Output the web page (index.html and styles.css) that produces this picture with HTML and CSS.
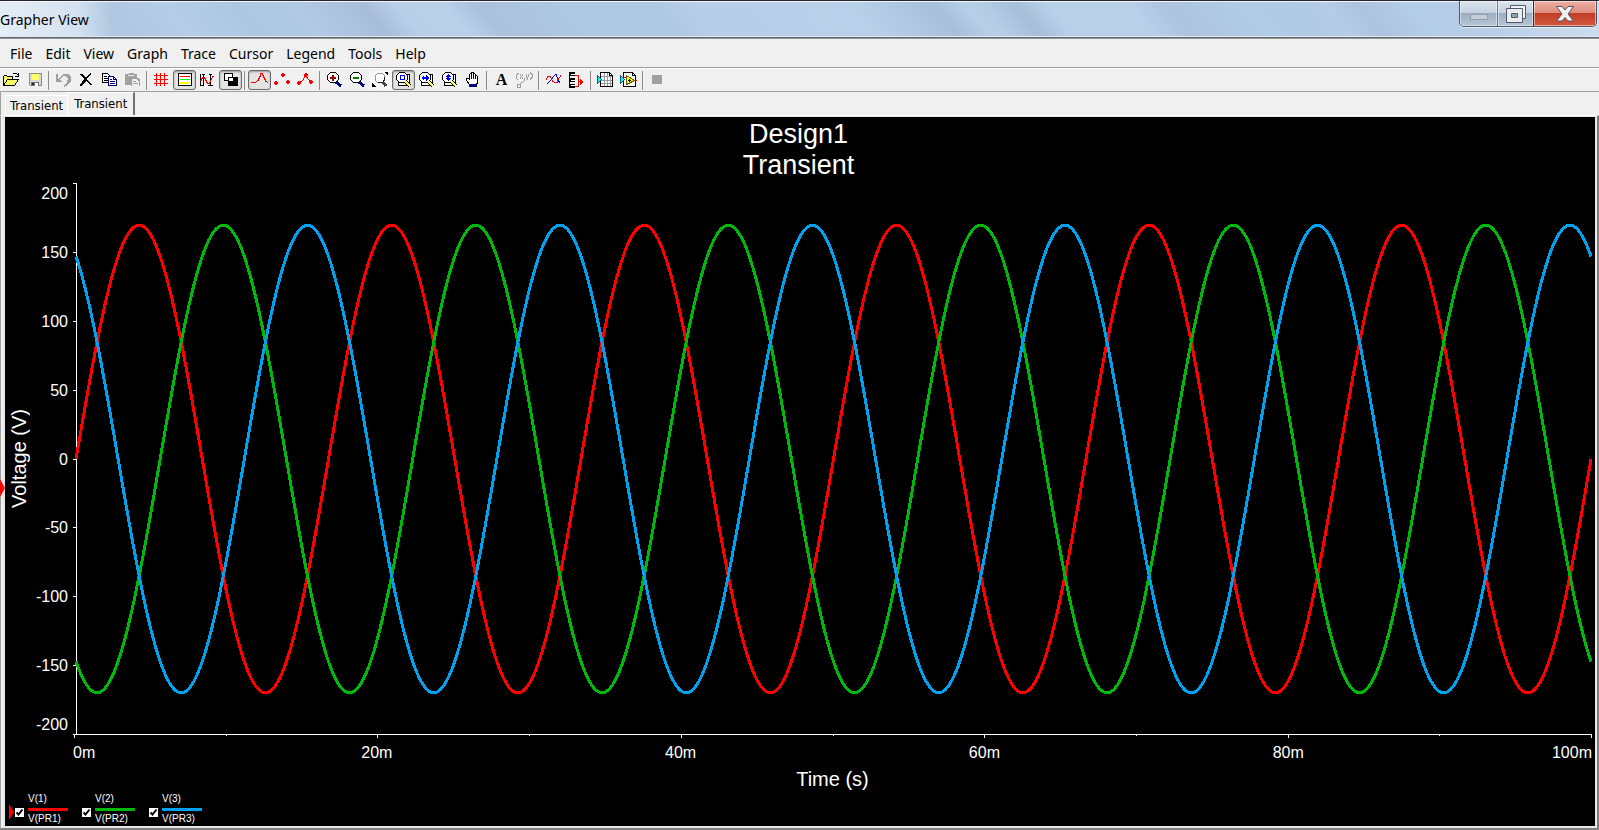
FILE: index.html
```
<!DOCTYPE html>
<html lang="en">
<head>
    <meta charset="UTF-8">
    <meta name="viewport" content="width=device-width, initial-scale=1.0">
    <link rel="stylesheet" href="styles.css">
    <title>Grapher View</title>
</head>
<body>
    <header class="title-bar">
        <h1 class="window-title">Grapher View</h1>
        <div class="window-buttons">
            <button class="win-btn" aria-label="Minimize" disabled>
                <svg width="20" height="16" viewBox="0 0 20 16"><rect x="1.500" y="8.500" width="17" height="5" fill="#c3cfd8" stroke="#929da9"/></svg>
            </button>
            <button class="win-btn restore" aria-label="Restore">
                <svg width="20" height="20" viewBox="0 0 20 20">
                    <path d="M4.500 1.500h15v13h-15z" fill="#f4f4f4" stroke="#535a6b"/>
                    <path d="M.5 4.500h16v14H.5z" fill="#ececec" stroke="#535a6b"/>
                    <path d="M5.500 9.500h6v4h-6z" fill="#8fa3b8" stroke="#535a6b"/>
                </svg>
            </button>
            <button class="win-btn close" aria-label="Close">
                <svg width="20" height="18" viewBox="0 0 20 18"><path d="M1.500 1.500h5.500l3 3.500 3-3.500h5.500l-5.500 7.500 5.500 7h-5.500l-3-3.500-3 3.500H1.500l5.500-7z" fill="#f3f3f3" stroke="#5a5260" stroke-linejoin="round"/></svg>
            </button>
        </div>
    </header>

    <nav class="menu-bar">
        <button class="menu">File</button>
        <button class="menu">Edit</button>
        <button class="menu">View</button>
        <button class="menu">Graph</button>
        <button class="menu">Trace</button>
        <button class="menu">Cursor</button>
        <button class="menu">Legend</button>
        <button class="menu">Tools</button>
        <button class="menu">Help</button>
    </nav>

    <div class="toolbar" role="toolbar">
        <button class="tool" aria-label="Open">
            <svg viewBox="0 0 17 16"><path d="M0 4h4v1h5v3h5L10 14H0z" fill="#ffff66"/><path d="M.5 13.500v-9l1-1h2l1 1h5v3M.5 13.500l4-6h11l-4 6zM9.500 2.500l1-1h3l2 2M15.500.5v4h-4" fill="none" stroke="#000"/></svg>
        </button>
        <button class="tool" aria-label="Save">
            <svg viewBox="0 0 17 16"><path d="M3 1h12v13H4l-1-1z" fill="#d8d8d8"/><path d="M3.500 12.500V1.500h12v12h-11z" fill="none" stroke="#8a8a8a"/><path d="M6 2h7v6H6z" fill="#ffff66"/><path d="M5 10h8v4H5z" fill="#777"/><path d="M9 11h3v3H9z" fill="#fff"/><path d="M6 11h2v2H6z" fill="#222"/></svg>
        </button>
        <span class="sep"></span>
        <button class="tool" aria-label="Undo">
            <svg viewBox="0 0 17 16"><path d="M1 2h2v5l2-2 3-3h5l3 3v4l-3 4-4 2v-2l3-3 1-3-2-3H8L5 8l2 1v1H1z" fill="#a0a0a0"/></svg>
        </button>
        <button class="tool" aria-label="Delete">
            <svg viewBox="0 0 17 16"><path d="M2 2h2l4 4 4-5h1v1L9 7l5 6h-2L8 9l-4 5H2v-1l4-6z" fill="#000"/></svg>
        </button>
        <button class="tool" aria-label="Copy">
            <svg viewBox="0 0 17 16"><path d="M1.500 1.500h5l3 3v6h-8z" fill="#fff" stroke="#000"/><path d="M3 4.500h3M3 6.500h5M3 8.500h5" stroke="#000"/><path d="M7.500 4.500h5l3 3v6h-8z" fill="#fff" stroke="#000080"/><path d="M12.500 4.500v3h3M9 7.500h2M9 9.500h5M9 11.500h5" fill="none" stroke="#000080"/></svg>
        </button>
        <button class="tool" aria-label="Paste">
            <svg viewBox="0 0 17 16"><path d="M1 2h3l1-1h4l1 1h3v4h2l1 2v6H7v-1H1z" fill="#a0a0a0"/><path d="M4 3.500h6M8.500 7.500h4l2 2v4h-6z" fill="#eee" stroke="#eee"/><path d="M9 9.500h3M9 11.500h5" stroke="#a0a0a0"/></svg>
        </button>
        <span class="sep"></span>
        <button class="tool" aria-label="Show grid">
            <svg viewBox="0 0 17 16"><path d="M3.500 1v13M7.500 1v13M11.500 1v13M1 3.500h14M1 7.500h14M1 11.500h14" stroke="#f00"/></svg>
        </button>
        <button class="tool" aria-label="Show legend" aria-pressed="true">
            <svg viewBox="0 0 17 16"><path d="M2.500 1.500h13v12h-13z" fill="#fff" stroke="#000"/><path d="M4 4.500h10" stroke="#f00"/><path d="M4 7.500h10" stroke="#0f0"/><path d="M4 10.500h10" stroke="#ff0" stroke-width="2"/></svg>
        </button>
        <button class="tool" aria-label="Show cursors">
            <svg viewBox="0 0 17 16"><path d="M1.500 2v12M4.500 2v12M11.500 2v12M1 13.500h4M9 13.500h5M3 2.500h3M10 2.500h3" stroke="#000"/><path d="M1.500 9.500l2-4h2l3 6h2l3-7h1" fill="none" stroke="#f00"/></svg>
        </button>
        <button class="tool" aria-label="Reverse colors" aria-pressed="true">
            <svg viewBox="0 0 17 16"><path d="M6 5h10v9H6z" fill="#000"/><path d="M2.500 1.500h8v7h-8z" fill="#fff" stroke="#000"/><path d="M6 5h4v3H6z" fill="#000"/><path d="M7 6h4v3H7z" fill="#fff"/></svg>
        </button>
        <span class="sep"></span>
        <button class="tool" aria-label="Lines" aria-pressed="true">
            <svg viewBox="0 0 17 16"><path d="M0 10.500h4l3-2 2-4 1-3h1l2 4 2 4 2 1" fill="none" stroke="#f00"/></svg>
        </button>
        <button class="tool" aria-label="Points">
            <svg viewBox="0 0 17 16"><path d="M1 9h2v1h1v2H3v1H1v-1H0v-2h1zM8 1h2v1h1v2h-1v1H8V4H7V2h1zM13 8h2v1h1v2h-1v1h-2v-1h-1V9h1z" fill="#f00"/></svg>
        </button>
        <button class="tool" aria-label="Lines and points">
            <svg viewBox="0 0 17 16"><path d="M1 9h2v1h1v2H3v1H1v-1H0v-2h1zM8 1h2v1h1v2h-1v1H8V4H7V2h1zM13 8h2v1h1v2h-1v1h-2v-1h-1V9h1z" fill="#f00"/><path d="M2.500 10.500l3-2 3-5 3 4 3 2" fill="none" stroke="#f00"/></svg>
        </button>
        <span class="sep"></span>
        <button class="tool" aria-label="Zoom in">
            <svg viewBox="0 0 17 16"><path d="M10 10l5 4" stroke="#000080" stroke-width="3"/><path d="M4.500.5h5l3 3v4l-3 3h-5l-3-3v-4z" fill="#fff" stroke="#000"/><path d="M7 3v6M4 6h6" stroke="#900" stroke-width="2"/></svg>
        </button>
        <button class="tool" aria-label="Zoom out">
            <svg viewBox="0 0 17 16"><path d="M10 10l5 4" stroke="#000080" stroke-width="3"/><path d="M4.500.5h5l3 3v4l-3 3h-5l-3-3v-4z" fill="#fff" stroke="#000"/><path d="M4 6h6" stroke="#008000" stroke-width="2"/></svg>
        </button>
        <button class="tool flat" aria-label="Zoom fit">
            <svg viewBox="0 0 17 16"><path d="M10 9l4 5" stroke="#444" stroke-width="3"/><path d="M5.500 1.500h5l2 2v4l-2 3h-5l-2-2v-5z" fill="#fff" stroke="#999"/><path d="M12.500 5v3l-2 2.500h-5" fill="none" stroke="#222"/><path d="M13 0h3v4zM0 11v4h4z" fill="#000"/></svg>
        </button>
        <button class="tool" aria-label="Zoom area" aria-pressed="true">
            <svg viewBox="0 0 17 16"><path d="M3.500 4.500v9h11v-11h-3" fill="#fff" stroke="#000"/><path d="M4.500.5h5l3 3v4l-3 3h-5l-3-3v-4z" fill="#fff" stroke="#000"/><path d="M5.500 3.500h4v4h-4z" fill="#fff" stroke="#00f"/><path d="M10 9l5 5" stroke="#000" stroke-width="4"/><path d="M10 9l5 5" stroke="#ff6" stroke-width="2"/></svg>
        </button>
        <button class="tool" aria-label="Zoom horizontal">
            <svg viewBox="0 0 17 16"><path d="M3.500 4.500v9h11v-11h-3" fill="#fff" stroke="#000"/><path d="M4.500.5h5l3 3v4l-3 3h-5l-3-3v-4z" fill="#fff" stroke="#000"/><path d="M3 6l3-3v2h2V3l3 3-3 3V7H6v2z" fill="#00f"/><path d="M10 9l5 5" stroke="#000" stroke-width="4"/><path d="M10 9l5 5" stroke="#ff6" stroke-width="2"/></svg>
        </button>
        <button class="tool" aria-label="Zoom vertical">
            <svg viewBox="0 0 17 16"><path d="M3.500 4.500v9h11v-11h-3" fill="#fff" stroke="#000"/><path d="M4.500.5h5l3 3v4l-3 3h-5l-3-3v-4z" fill="#fff" stroke="#000"/><path d="M7 2l3 3H8v1h2l-3 3-3-3h2V5H4z" fill="#00f"/><path d="M10 9l5 5" stroke="#000" stroke-width="4"/><path d="M10 9l5 5" stroke="#ff6" stroke-width="2"/></svg>
        </button>
        <button class="tool" aria-label="Pan">
            <svg viewBox="0 0 17 16"><path d="M5.500 12.500l-3-4v-2h2l1 1v-5l1-1 1 1v-2h2v2l1-1 1 1v2l1-1 1 1v5l-1 4z" fill="#fff" stroke="#000"/><path d="M7.500 2v5M9.500 2v5M11.500 3v4" stroke="#000"/><path d="M5 12h8v3H5z" fill="#000080"/></svg>
        </button>
        <span class="sep"></span>
        <button class="tool letter" aria-label="Add text">A</button>
        <button class="tool label" aria-label="Add data label">
            <svg viewBox="0 0 17 16"><path d="M2.500 1l-2 2v3l1 2M4 2.500l3 4M7 2.500l-3 4M8.500 6v2M10 2.500l1 3M13 2.500l-2 5M14 .5l2 2v3l-2 2M9 8.500l-6 4M1 12h3v3H1z" fill="none" stroke="#a0a0a0"/></svg>
        </button>
        <span class="sep"></span>
        <button class="tool" aria-label="Overlay traces">
            <svg viewBox="0 0 17 16"><path d="M1.500 12.500l4-4 3-4 2-2h1l1 5 3 4" fill="none" stroke="#00f"/><path d="M1 7.500l2-3h2l3 5 2 1h2l1-3 3-4" fill="none" stroke="#f00"/></svg>
        </button>
        <button class="tool" aria-label="Merge pages">
            <svg viewBox="0 0 17 16"><path d="M1 0h6v4H1zM1 6h6v4H1zM1 12h6v4H1zM1 0h1v16H1z" fill="#000"/><path d="M3 2.500h4M3 8.500h4M3 13.500h4" stroke="#fff"/><path d="M7 3.500h3.500v11H7" fill="none" stroke="#f00"/><path d="M10.500 9.500h3" stroke="#f00"/><path d="M12 7l4 3-4 3z" fill="#f00"/></svg>
        </button>
        <span class="sep"></span>
        <button class="tool" aria-label="Export to Excel">
            <svg viewBox="0 0 17 16"><path d="M3.500.5h9l3 3v11h-12z" fill="#fff" stroke="#000"/><path d="M7.500 1v13M10.500 1v13M13.500 4v10M4 4.500h11M4 8.500h11M4 11.500h11" stroke="#999"/><path d="M12.500.5v3h3" fill="none" stroke="#000"/><path d="M.5 3.500l4 4-4 4z" fill="#0ff" stroke="#006080"/></svg>
        </button>
        <button class="tool" aria-label="Export to measurement file">
            <svg viewBox="0 0 17 16"><path d="M3.500.5h9l3 3v11h-12z" fill="#fff" stroke="#000"/><path d="M12.500.5v3h3" fill="none" stroke="#000"/><path d="M.5 3.500l4 4-4 4z" fill="#0ff" stroke="#006080"/><path d="M3 5.500h4M14 8.500h3" stroke="#f00"/><path d="M6.500 3.500l8 5-8 4z" fill="#ff0" stroke="#660"/><path d="M8 8.500h3M9.500 7v3" stroke="#000"/></svg>
        </button>
        <span class="sep"></span>
        <button class="tool" aria-label="Stop" disabled>
            <svg viewBox="0 0 17 16"><path d="M3 3h10v9H3z" fill="#a0a0a0"/></svg>
        </button>
    </div>

    <div class="tabs" role="tablist">
        <button class="tab" role="tab" aria-selected="false">Transient</button>
        <button class="tab active" role="tab" aria-selected="true">Transient</button>
    </div>

    <main class="chart-frame">
        <span class="page-marker"></span>
        <div class="chart">
            <h2 class="chart-title">Design1<br>Transient</h2>
            <div class="y-title"><span>Voltage (V)</span></div>
            <div class="y-labels">
                <span>200</span><span>150</span><span>100</span><span>50</span><span>0</span><span>-50</span><span>-100</span><span>-150</span><span>-200</span>
            </div>
            <div class="plot"><svg id="plot"></svg></div>
            <div class="x-labels">
                <span>0m</span><span>20m</span><span>40m</span><span>60m</span><span>80m</span><span>100m</span>
            </div>
            <div class="x-title">Time (s)</div>
            <div class="legend">
                <span class="trace-marker"></span>
                <label class="legend-item"><input type="checkbox" checked><span class="trace red"><span>V(1)</span><span>V(PR1)</span></span></label>
                <label class="legend-item"><input type="checkbox" checked><span class="trace green"><span>V(2)</span><span>V(PR2)</span></span></label>
                <label class="legend-item"><input type="checkbox" checked><span class="trace blue"><span>V(3)</span><span>V(PR3)</span></span></label>
            </div>
        </div>
    </main>

    <script>
        document.addEventListener("DOMContentLoaded", function () {
            const svg = document.getElementById("plot");
            const checks = document.querySelectorAll(".legend-item input");
            const tick = 3;
            const amplitude = 169.7;
            const frequency = 60;
            const traces = [
                { color: "#ff0000", phase: 0 },
                { color: "#00b80c", phase: -120 },
                { color: "#00a2f0", phase: 120 }
            ];

            const addPath = (d, color, width) => {
                const path = document.createElementNS("http://www.w3.org/2000/svg", "path");
                path.setAttribute("d", d);
                path.setAttribute("fill", "none");
                path.setAttribute("stroke", color);
                path.setAttribute("stroke-width", width);
                svg.appendChild(path);
            };

            const draw = () => {
                const box = svg.getBoundingClientRect();
                const width = Math.round(box.width) - tick - 1;
                const height = Math.round(box.height) - tick - 1;
                svg.innerHTML = "";

                // axes with their ticks
                let axes = `M${tick + 0.5} 0V${height + 0.5}M1 ${height + 0.5}H${tick + width + 1}`;
                for (let i = 0; i <= 8; i++) {
                    const y = Math.round(height * i / 8) + 0.5;
                    axes += `M0 ${y}H${tick}`;
                }
                for (let i = 0; i <= 10; i++) {
                    const x = 1 + Math.round((width + 2) * i / 10) + 0.5;
                    axes += `M${x} ${height}v${i % 2 ? 2 : 4}`;
                }
                addPath(axes, "#fff", 1);

                traces.forEach(function (trace, index) {
                    if (!checks[index].checked) {
                        return;
                    }
                    const points = [];
                    for (let x = 0; x <= width; x++) {
                        const time = 0.1 * x / width;
                        const volts = amplitude * Math.sin(2 * Math.PI * frequency * time + trace.phase * Math.PI / 180);
                        points.push(`${tick + x} ${(height / 2 * (1 - volts / 200) + 0.5).toFixed(2)}`);
                    }
                    addPath("M" + points.join("L"), trace.color, 3);
                });
            };

            checks.forEach(function (check) {
                check.addEventListener("change", draw);
            });
            window.addEventListener("resize", draw);
            draw();
        });
    </script>
</body>
</html>
```
FILE: styles.css
```
* {
    box-sizing: border-box;
}

body {
    margin: 0;
    height: 100vh;
    display: flex;
    flex-direction: column;
    overflow: hidden;
    background-color: #f0f0f0;
    color: #000;
    font-family: "Noto Sans", sans-serif;
}

button {
    margin: 0;
    padding: 0;
    border: none;
    background: none;
    color: inherit;
    font-family: inherit;
}

/* Title bar */
.title-bar {
    display: flex;
    justify-content: space-between;
    height: 39px;
    padding-right: 2px;
    border-top: 1px solid #24242f;
    border-bottom: 1px solid #969696;
    box-shadow: inset 0 1px #f4f8fc, inset 0 -1px #5c6670, inset 0 -2px #e4edf6;
    background:
        linear-gradient(to right, rgba(238, 244, 250, 0.8), rgba(232, 240, 248, 0.6) 70%, rgba(232, 240, 248, 0)) 0 0 / 110px 100% no-repeat,
        linear-gradient(50deg, #c0d3e9 0%, #b7cce5 5%, #b1c7e1 8%, #b5cde7 12%, #adc7e2 16%, #b1c9e4 20%, #a9bdda 24%, #b9cfe8 26%, #b9d0e9 29%, #abc0dc 31%, #aec8e2 36%, #afc8e2 42%, #b8cee8 44%, #b9d0e9 54%, #a8bfd9 59%, #b8cfe8 61%, #b5cce5 62%, #a7bed8 64%, #b9d0e9 66%, #b9d0e9 71%, #adc3df 73%, #b1cce6 78%, #b0cae4 81%, #b6cce8 83%, #adc2de 85%, #b4cde8 88%, #b6cce7 91%, #d0e0f0 100%);
}

.window-title {
    margin: 0;
    line-height: 37px;
    font-size: 14px;
    font-weight: normal;
}

.window-buttons {
    display: flex;
    height: 26px;
    border: 1px solid #4b5563;
    border-top: none;
    border-radius: 0 0 5px 5px;
    overflow: hidden;
    box-shadow: 0 1px #e8f0f8;
}

.win-btn {
    display: flex;
    align-items: center;
    justify-content: center;
    width: 37px;
    box-shadow: inset 0 0 0 1px rgba(255, 255, 255, 0.5);
    background: linear-gradient(#dbe5ef, #c3d0de 48%, #9db0c3 50%, #b4c5d7);
}

.win-btn.restore {
    width: 36px;
    border-left: 1px solid #6b7685;
}

.win-btn.close {
    width: 63px;
    border-left: 1px solid #5e1c14;
    background: linear-gradient(#eeb0a3, #dc8a7b 48%, #c13d26 50%, #d4593f);
}

/* Menus */
.menu-bar {
    display: flex;
    gap: 13px;
    height: 29px;
    padding-left: 10px;
    border-bottom: 1px solid #a0a0a0;
}

.menu {
    font-size: 14px;
}

/* Toolbar */
.toolbar {
    display: flex;
    align-items: center;
    height: 24px;
    border-top: 1px solid #fff;
    border-bottom: 1px solid #a0a0a0;
}

.tool {
    display: flex;
    align-items: center;
    justify-content: center;
    width: 23px;
    height: 20px;
}

.tool svg {
    flex: none;
    width: 17px;
    height: 16px;
    shape-rendering: crispEdges;
}

.tool[aria-pressed="true"] {
    border: 1px solid #6c6c6c;
    border-radius: 3px;
    box-shadow: inset 0 1px 2px #999;
    background-color: #e4e4e4;
}

.tool.flat {
    border-radius: 3px;
    background-color: #f7f7f7;
}

.tool.letter {
    font: bold 16px "Liberation Serif", serif;
}

.sep {
    width: 2px;
    height: 19px;
    margin: 0 2px;
    border-left: 1px solid #8c8c8c;
}

/* Tabs */
.tabs {
    display: flex;
    align-items: flex-end;
    height: 23px;
    padding-left: 4px;
    border-left: 1px solid #a0a0a0;
}

.tab {
    height: 20px;
    padding: 0 4px;
    border-top: 1px solid #fff;
    border-left: 1px solid #fff;
    font: 13px "DejaVu Sans Condensed", "DejaVu Sans", sans-serif;
}

.tab.active {
    height: 23px;
    padding: 0 6px 1px;
    border-right: 2px solid #707070;
}

/* Chart */
.chart-frame {
    position: relative;
    flex: 1;
    display: flex;
    min-height: 0;
    padding-left: 2px;
    border: 1px solid #a0a0a0;
    border-top: 1px solid #fff;
    border-right: 2px solid #808080;
    border-bottom: 2px solid #808080;
}

.chart {
    flex: 1;
    display: grid;
    grid-template-columns: 30px 38px 1fr;
    grid-template-rows: auto 1fr 20px 34px 34px;
    padding-right: 3px;
    border: 2px solid #e8e8e8;
    border-top-width: 1px;
    background-color: #000;
    color: #fff;
    font-family: "Liberation Sans", Arial, sans-serif;
    font-size: 16px;
    line-height: 20px;
}

.page-marker {
    position: absolute;
    top: 363px;
    left: -1px;
    border: 9px solid transparent;
    border-left: 5px solid #f00;
    border-right: none;
}

.chart-title {
    grid-column: 1 / -1;
    margin: 0;
    padding: 2px 0;
    font-size: 27px;
    font-weight: normal;
    line-height: 31px;
    text-align: center;
}

.y-title {
    display: flex;
    align-items: center;
    justify-content: center;
    padding: 0 2px 4px 0;
    font-size: 20px;
}

.y-title span {
    writing-mode: vertical-rl;
    transform: rotate(180deg);
}

.y-labels {
    display: flex;
    flex-direction: column;
    padding: 1px 5px 3px 0;
    text-align: right;
}

.y-labels span {
    flex: 2 1 0;
    display: flex;
    align-items: center;
    justify-content: flex-end;
}

.y-labels span:first-child {
    flex-grow: 1;
    align-items: flex-start;
}

.y-labels span:last-child {
    flex-grow: 1;
    align-items: flex-end;
}

.plot {
    display: flex;
    min-width: 0;
    min-height: 0;
}

.plot svg {
    width: 100%;
    height: 100%;
    shape-rendering: crispEdges;
}

.x-labels {
    grid-column: 3;
    display: flex;
    padding-top: 5px;
}

.x-labels span {
    flex: 2 1 0;
    text-align: center;
}

.x-labels span:first-child {
    flex-grow: 1;
    text-align: left;
}

.x-labels span:last-child {
    flex-grow: 1;
    text-align: right;
}

.x-title {
    grid-column: 3;
    padding-top: 11px;
    font-size: 20px;
    text-align: center;
}

/* Legend */
.legend {
    grid-column: 1 / -1;
    display: flex;
    align-items: center;
    padding-left: 4px;
    font-size: 10px;
    line-height: 14px;
}

.trace-marker {
    margin-top: 6px;
    border: 8px solid transparent;
    border-left: 5px solid #f00;
    border-right: none;
}

.legend-item {
    display: flex;
    align-items: center;
    gap: 4px;
    width: 67px;
    padding-left: 1px;
}

.legend-item input {
    appearance: none;
    width: 9px;
    height: 9px;
    margin: 7px 0 0;
    background-color: #fff;
}

.legend-item input:checked {
    background-image: url("data:image/svg+xml,%3Csvg xmlns='http://www.w3.org/2000/svg' viewBox='0 0 9 9'%3E%3Cpath d='M1.500 4.500l2 2 4-5' fill='none' stroke='%23000' stroke-width='2'/%3E%3C/svg%3E");
}

.trace span {
    display: block;
    width: 40px;
}

.trace span:first-child {
    margin-bottom: 1px;
    padding-bottom: 2px;
    border-bottom: 3px solid;
    border-radius: 1px;
}

.trace.red span:first-child {
    border-color: #f00;
}

.trace.green span:first-child {
    border-color: #00b80c;
}

.trace.blue span:first-child {
    border-color: #00a2f0;
}
```
